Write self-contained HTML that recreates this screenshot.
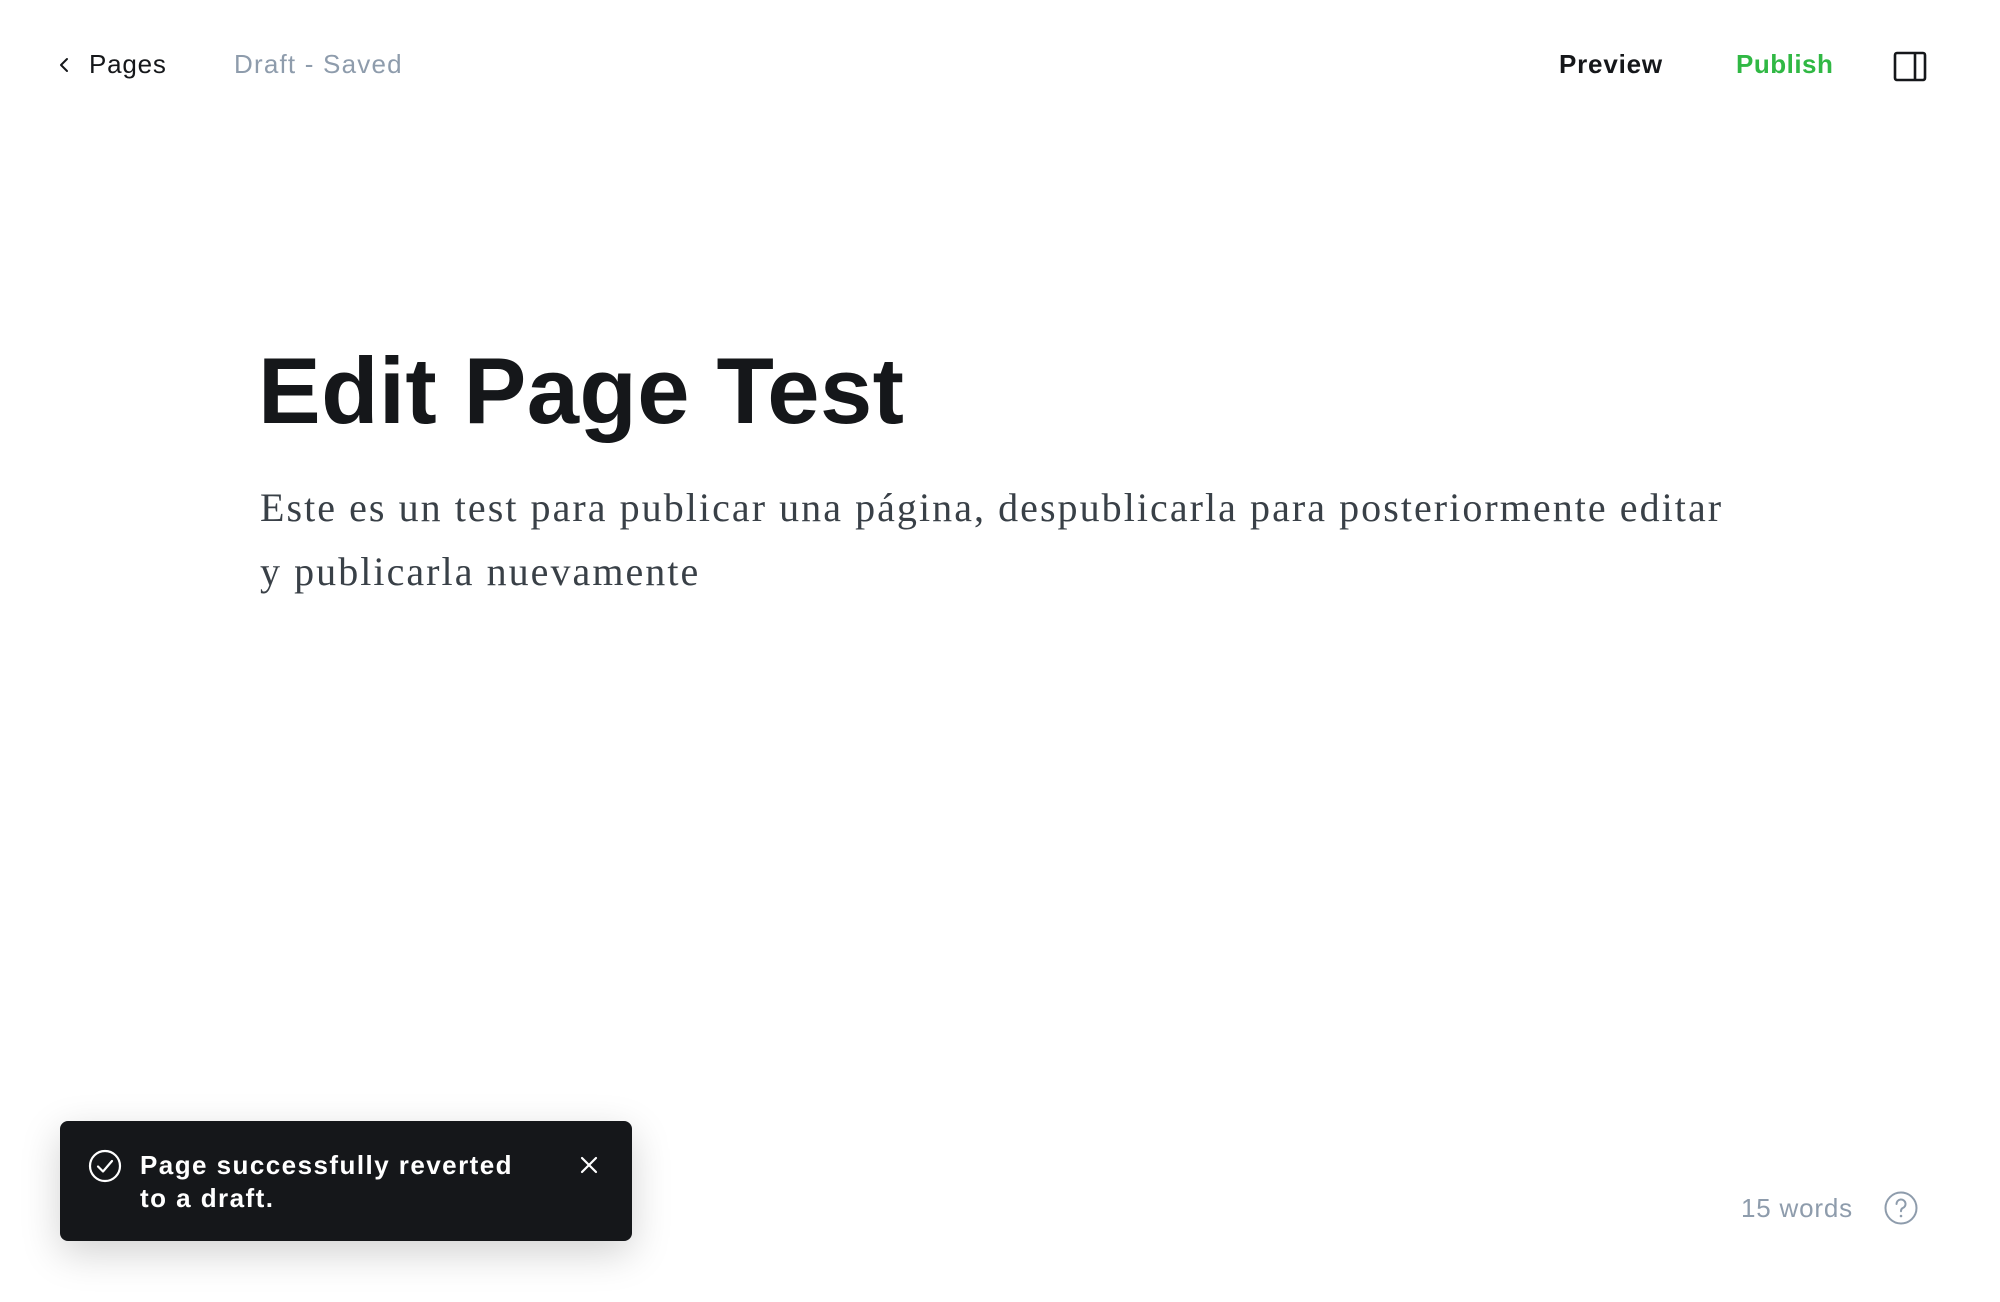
<!DOCTYPE html>
<html><head><meta charset="utf-8"><style>
*{margin:0;padding:0;box-sizing:border-box}
body{width:2000px;height:1302px;background:#fff;position:relative;overflow:hidden;font-family:"Liberation Sans",sans-serif}
.a{position:absolute;white-space:nowrap}
</style></head><body>
<svg class="a" style="left:57px;top:56px" width="16" height="18" viewBox="0 0 16 18"><path d="M10 3 L4 9 L10 15" fill="none" stroke="#15171a" stroke-width="2" stroke-linecap="round" stroke-linejoin="round"/></svg>
<div class="a" style="left:89px;top:49px;font-size:26px;color:#15171a;line-height:30px;letter-spacing:0.8px">Pages</div>
<div class="a" style="left:234px;top:49px;font-size:26px;color:#8e9cac;line-height:30px;letter-spacing:1.2px">Draft - Saved</div>
<div class="a" style="left:1559px;top:49px;font-size:26px;color:#15171a;font-weight:bold;line-height:30px;letter-spacing:0.8px">Preview</div>
<div class="a" style="left:1736px;top:49px;font-size:26px;color:#30b844;font-weight:bold;line-height:30px;letter-spacing:0.5px">Publish</div>
<svg class="a" style="left:1893px;top:51px" width="34" height="31" viewBox="0 0 34 31"><rect x="2" y="2" width="30" height="27" rx="2" fill="none" stroke="#15171a" stroke-width="2.6"/><line x1="22" y1="2" x2="22" y2="29" stroke="#15171a" stroke-width="2.6"/></svg>
<div class="a" style="left:258px;top:336px;font-size:94px;font-weight:bold;color:#15171a;letter-spacing:0.4px;line-height:110px">Edit Page Test</div>
<div class="a" style="left:260px;top:476px;font-size:40px;color:#394047;font-family:'Liberation Serif',serif;line-height:63.5px;letter-spacing:2.05px">Este es un test para publicar una página, despublicarla para posteriormente editar<br>y publicarla nuevamente</div>
<div class="a" style="left:60px;top:1121px;width:572px;height:120px;background:#15171a;border-radius:8px;box-shadow:0 12px 40px rgba(0,0,0,0.18)"></div>
<svg class="a" style="left:87px;top:1148px" width="36" height="36" viewBox="0 0 36 36"><circle cx="18" cy="18" r="15" fill="none" stroke="#fff" stroke-width="2.2"/><path d="M11 18.5 L16 23.5 L25 13" fill="none" stroke="#fff" stroke-width="2.2" stroke-linecap="round" stroke-linejoin="round"/></svg>
<div class="a" style="left:140px;top:1149px;font-size:26px;font-weight:bold;color:#fff;line-height:33px;letter-spacing:1.45px">Page successfully reverted<br>to a draft.</div>
<svg class="a" style="left:579px;top:1155px" width="20" height="20" viewBox="0 0 20 20"><path d="M3 3 L17 17 M17 3 L3 17" stroke="#fff" stroke-width="2.2" stroke-linecap="round"/></svg>
<div class="a" style="left:1741px;top:1193px;font-size:26px;color:#8e9cac;line-height:30px;letter-spacing:0.8px">15 words</div>
<svg class="a" style="left:1883px;top:1190px" width="36" height="36" viewBox="0 0 36 36"><circle cx="18" cy="18" r="15.5" fill="none" stroke="#8e9cac" stroke-width="2"/><path d="M13.5 14 a4.5 4.5 0 1 1 6 4.2 c-1.2 .6 -1.5 1.3 -1.5 3" fill="none" stroke="#8e9cac" stroke-width="2" stroke-linecap="round"/><circle cx="18" cy="26" r="1.3" fill="#8e9cac"/></svg>
</body></html>
